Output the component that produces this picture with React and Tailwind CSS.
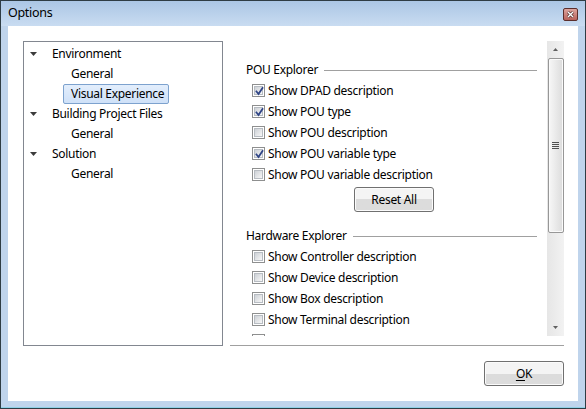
import React from "react";

function Check({ checked }) {
  return (
    <span className="w-[13px] h-[13px] border border-[#8e8f8f] bg-white p-[1px] shrink-0 flex">
      <span className="flex-1 border border-[#b7bcc2] bg-gradient-to-br from-[#cdd1d6] to-[#f7f7f7] flex items-center justify-center relative">
        {checked && (
          <svg width="11" height="11" viewBox="0 0 11 11" className="absolute left-[-1px] top-[-1px]">
            <path d="M2.5 5.5 L4.5 8 L8.5 2" fill="none" stroke="#2f4486" strokeWidth="1.8" strokeLinecap="square" />
          </svg>
        )}
      </span>
    </span>
  );
}

function Row({ checked, label }) {
  return (
    <div className="h-[21px] flex items-center pl-[6px] gap-[3px]">
      <Check checked={checked} />
      {label && <span>{label}</span>}
    </div>
  );
}

function GroupHeader({ title }) {
  return (
    <div className="h-[18px] flex items-center gap-[6px]">
      <span className="whitespace-nowrap">{title}</span>
      <span className="flex-1 h-px bg-[#a0a0a0]" />
    </div>
  );
}

function Arrow() {
  return (
    <svg width="7" height="4" viewBox="0 0 7 4">
      <polygon points="0,0 7,0 3.5,4" fill="#3c3c3c" />
    </svg>
  );
}

function TreeRow({ children, level, expander, selected }) {
  return (
    <div className="h-[20px] flex items-center">
      {level === 0 ? (
        <>
          <span className="w-[28px] flex justify-center pl-[2px] pr-[12px]">{expander && <Arrow />}</span>
          <span>{children}</span>
        </>
      ) : (
        <span
          className={
            "ml-[39px] h-[20px] flex items-center pl-[7px] pr-[4px] " +
            (selected
              ? "border border-[#7da2ce] rounded-[2px] bg-gradient-to-b from-[#e3eefc] to-[#cfe1f8]"
              : "border border-transparent")
          }
        >
          {children}
        </span>
      )}
    </div>
  );
}

const btn =
  "w-[80px] h-[25px] border border-[#707070] rounded-[3px] bg-gradient-to-b from-[#f4f4f4] from-50% to-[#dcdcdc] to-50% flex items-center justify-center shadow-[inset_0_0_0_1px_#fbfbfb]";

export default function App() {
  return (
    <div
      className="w-[586px] h-[409px] flex flex-col border border-[#2e3c44] bg-[#bfd4ec] text-[12px] tracking-[-0.3px] text-black"
      style={{ fontFamily: '"Noto Sans", "Open Sans", sans-serif' }}
    >
      {/* Title bar */}
      <div className="h-[25px] shrink-0 flex items-center justify-between pl-[7px] pr-[7px] bg-gradient-to-b from-[#abc6e5] to-[#c9dcf1]">
        <span className="text-[12.5px]">Options</span>
        <span className="w-[15px] h-[13px] mt-[1px] border border-[#5b2e2b] rounded-[2px] bg-gradient-to-b from-[#dda59f] to-[#b8625b] flex items-center justify-center">
          <svg width="7" height="7" viewBox="0 0 7 7">
            <path d="M1 1 L6 6 M6 1 L1 6" stroke="#4a2a28" strokeWidth="2.6" />
            <path d="M1 1 L6 6 M6 1 L1 6" stroke="#ffffff" strokeWidth="1.4" />
          </svg>
        </span>
      </div>
      {/* Body */}
      <div className="flex-1 px-[7px] pb-[6px] border-b border-[#8fd0e6]">
        <div className="h-full bg-white flex flex-col pl-[15px] pr-[14px] pt-[15px] pb-[15px]">
          <div className="flex gap-[7px]">
            {/* Tree */}
            <div className="w-[200px] h-[305px] border border-[#828790] pt-[2px]">
              <TreeRow level={0} expander>Environment</TreeRow>
              <TreeRow level={1}>General</TreeRow>
              <TreeRow level={1} selected>Visual Experience</TreeRow>
              <TreeRow level={0} expander>Building Project Files</TreeRow>
              <TreeRow level={1}>General</TreeRow>
              <TreeRow level={0} expander>Solution</TreeRow>
              <TreeRow level={1}>General</TreeRow>
            </div>
            {/* Right panel */}
            <div className="flex-1 h-[305px] flex flex-col justify-between">
              <div className="h-[295px] flex">
                <div className="flex-1 overflow-hidden pl-[16px] pr-[10px] pt-[20px]">
                  <GroupHeader title="POU Explorer" />
                  <div className="mt-[1px]">
                    <Row checked label="Show DPAD description" />
                    <Row checked label="Show POU type" />
                    <Row label="Show POU description" />
                    <Row checked label="Show POU variable type" />
                    <Row label="Show POU variable description" />
                  </div>
                  <div className={btn + " ml-[108px] mt-[2px]"}>Reset All</div>
                  <div className="mt-[15px]">
                    <GroupHeader title="Hardware Explorer" />
                  </div>
                  <div className="mt-[1px]">
                    <Row label="Show Controller description" />
                    <Row label="Show Device description" />
                    <Row label="Show Box description" />
                    <Row label="Show Terminal description" />
                    <Row />
                  </div>
                </div>
                {/* Scrollbar */}
                <div className="w-[17px] bg-gradient-to-r from-[#e6e6e6] to-[#f2f2f2] flex flex-col items-center">
                  <div className="h-[17px] flex items-center justify-center">
                    <svg width="5" height="3" viewBox="0 0 5 3">
                      <polygon points="2.5,0 5,3 0,3" fill="#606060" />
                    </svg>
                  </div>
                  <div className="w-[16px] h-[175px] border border-[#979797] rounded-[2px] bg-gradient-to-r from-[#f7f7f7] to-[#dcdcdc] shadow-[inset_0_0_0_1px_#fafafa] flex items-center justify-center">
                    <svg width="7" height="8" viewBox="0 0 7 8">
                      <path d="M0 0.5 H7 M0 2.5 H7 M0 4.5 H7 M0 6.5 H7" stroke="#505050" strokeWidth="1" />
                    </svg>
                  </div>
                  <div className="flex-1" />
                  <div className="h-[17px] flex items-center justify-center">
                    <svg width="5" height="3" viewBox="0 0 5 3">
                      <polygon points="0,0 5,0 2.5,3" fill="#606060" />
                    </svg>
                  </div>
                </div>
              </div>
              <div className="h-px bg-[#a0a0a0]" />
            </div>
          </div>
          <div className="flex-1" />
          <div className="flex justify-end">
            <div className={btn}>
              <span>
                <span className="underline underline-offset-2">O</span>K
              </span>
            </div>
          </div>
        </div>
      </div>
    </div>
  );
}
